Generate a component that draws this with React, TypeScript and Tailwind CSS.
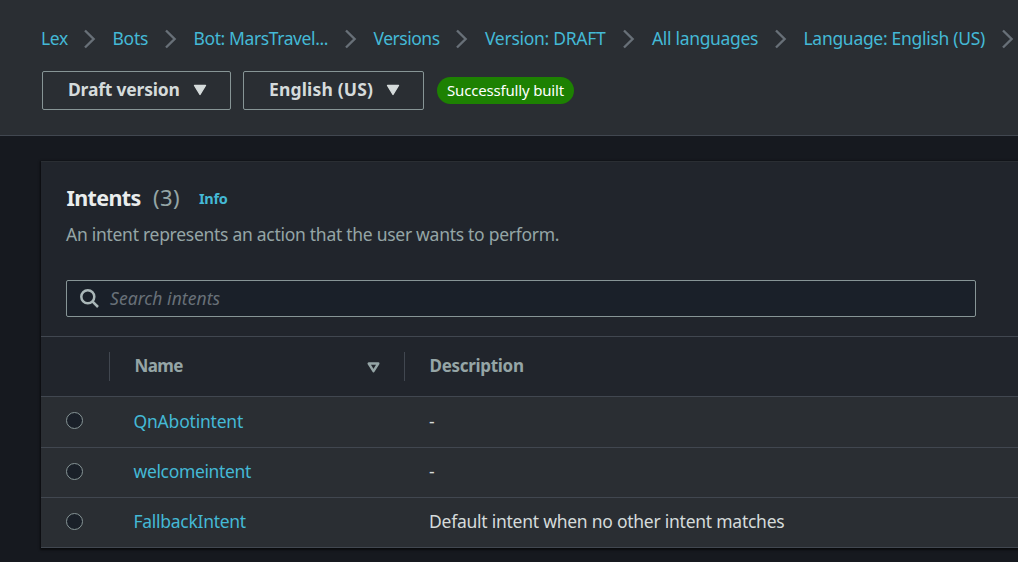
import type { ReactNode } from 'react';

const crumbs = [
  { label: 'Lex', width: 'w-[42.5px]', tracking: 'tracking-[-0.34px]' },
  { label: 'Bots', width: 'w-[52px]', tracking: 'tracking-[-0.26px]' },
  { label: 'Bot: MarsTravel...', width: 'w-[151px]', tracking: 'tracking-[-0.4px]' },
  { label: 'Versions', width: 'w-[82.5px]', tracking: 'tracking-[-0.48px]' },
  { label: 'Version: DRAFT', width: 'w-[138px]', tracking: 'tracking-[-0.29px]' },
  { label: 'All languages', width: 'w-[122.5px]', tracking: 'tracking-[-0.32px]' },
  { label: 'Language: English (US)', width: 'w-[198px]', tracking: 'tracking-[-0.3px]' },
];

const intents = [
  { name: 'QnAbotintent', description: '-', height: 'h-[51px]', tracking: 'tracking-[-0.2px]' },
  { name: 'welcomeintent', description: '-', height: 'h-[50px]', tracking: 'tracking-[-0.35px]' },
  {
    name: 'FallbackIntent',
    description: 'Default intent when no other intent matches',
    height: 'h-[50px]',
    tracking: 'tracking-[-0.28px]',
  },
];

function Chevron() {
  return (
    <svg className="mt-px mr-[17px] h-5 w-3 shrink-0" viewBox="0 0 12 20" fill="none">
      <path d="M1 1.5 L9.6 10 L1 18.5" stroke="#687078" strokeWidth="2.4" />
    </svg>
  );
}

function DropdownButton({ children, className }: { children: ReactNode; className: string }) {
  return (
    <button
      className={`flex h-[39px] items-center rounded-[2px] border border-[#879596] pl-[25px] font-bold text-[#d5dbdb] ${className}`}
    >
      <span className="-mt-1 whitespace-nowrap">{children}</span>
      <svg className="-mt-0.5 ml-auto h-3 w-[14px]" viewBox="0 0 14 12">
        <path d="M1.5 1.5 H12.5 L7 10.5 Z" fill="#d5dbdb" stroke="#d5dbdb" strokeWidth="1.4" strokeLinejoin="round" />
      </svg>
    </button>
  );
}

export default function App() {
  return (
    <div className="flex h-[562px] w-[1018px] flex-col overflow-hidden bg-[#16191f] font-['Noto_Sans',sans-serif] text-[17.5px] leading-6">
      <header className="h-[136px] shrink-0 border-b border-[#414750] bg-[#2a2e33] pl-[41px]">
        <nav className="flex h-[71px] items-start pt-[26px]">
          {crumbs.map((c) => (
            <div key={c.label} className="flex shrink-0 items-center whitespace-nowrap">
              <a className={`text-[#44b9d6] ${c.width} ${c.tracking}`}>{c.label}</a>
              <Chevron />
            </div>
          ))}
        </nav>
        <div className="flex items-center pl-px">
          <DropdownButton className="w-[189px] pr-[23px] tracking-[-0.2px]">Draft version</DropdownButton>
          <DropdownButton className="ml-3 w-[181px] pr-[23px] tracking-[0.16px]">English (US)</DropdownButton>
          <span className="ml-[13px] flex h-[27px] w-[137px] items-center justify-center rounded-full bg-[#1d8102] pb-px text-[15px] tracking-[-0.18px] whitespace-nowrap text-white">
            Successfully built
          </span>
        </div>
      </header>

      <main className="pt-[25px] pl-[41px]">
        <section className="w-[1000px] shadow-[0_1px_2px_1px_rgba(0,0,0,0.6)]">
          <div className="h-[175px] border-t border-[#2a2e33] bg-[#21252c] pl-[25px]">
            <div className="flex h-8 items-start pt-[3px] leading-8">
              <h1 className="mt-[17px] w-[87px] pl-[0.5px] text-[21.5px] font-bold tracking-[-0.65px] text-[#eaeded]">Intents</h1>
              <span className="mt-4 w-[46px] text-[22px] tracking-[0.4px] text-[#95a5a6]">(3)</span>
              <a className="mt-[17px] text-[14.5px] font-bold tracking-[-0.3px] text-[#44b9d6]">Info</a>
            </div>
            <p className="mt-[28px] tracking-[-0.28px] text-[#95a5a6]">
              An intent represents an action that the user wants to perform.
            </p>
            <div className="mt-[34px] flex h-[37px] w-[910px] items-center rounded-[2px] border border-[#879596] bg-[#1a2029] pl-[13px]">
              <svg className="h-[19px] w-[19px]" viewBox="0 0 19 19" fill="none" stroke="#aab7b8" strokeWidth="2.5">
                <circle cx="7.8" cy="7.8" r="6.5" />
                <path d="M12.4 12.4 L18 18" />
              </svg>
              <span className="ml-[11px] -mt-[2px] tracking-[0.05px] text-[#687078] italic">Search intents</span>
            </div>
          </div>

          <div className="flex h-[61px] items-center border-y border-[#414750] bg-[#21252c] font-bold text-[#95a5a6]">
            <div className="h-[29px] w-[69px] border-r border-[#414750]" />
            <div className="flex h-[29px] w-[295px] items-center border-r border-[#414750] pl-[24.5px]">
              <span className="-mt-0.5 text-[17px] tracking-[-0.6px]">Name</span>
              <svg className="mt-px mr-6 ml-auto h-[11px] w-[13px]" viewBox="0 0 13 11" fill="none">
                <path d="M1.7 1.5 H11.3 L6.5 9.2 Z" stroke="#95a5a6" strokeWidth="2.4" strokeLinejoin="round" />
              </svg>
            </div>
            <span className="-mt-0.5 pl-[24.5px] text-[17px] tracking-[-0.3px]">Description</span>
          </div>

          {intents.map((intent) => (
            <div
              key={intent.name}
              className={`flex items-center border-b border-[#414750] bg-[#2a2e33] ${intent.height}`}
            >
              <div className="w-[92.5px] pl-[25px]">
                <div className="-mt-[3px] h-[17px] w-[17px] rounded-full border border-[#879596] bg-[#1a2029]" />
              </div>
              <a className={`-mt-[3px] w-[295px] text-[#44b9d6] ${intent.tracking}`}>{intent.name}</a>
              <span className="-mt-[3px] pl-[0.5px] tracking-[-0.25px] whitespace-nowrap text-[#d5dbdb]">{intent.description}</span>
            </div>
          ))}
        </section>
      </main>
    </div>
  );
}
